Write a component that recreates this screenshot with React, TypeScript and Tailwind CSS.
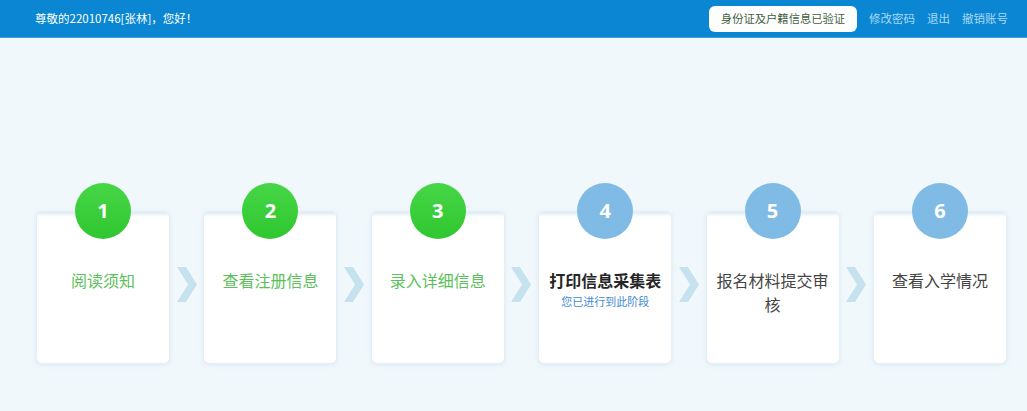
import React from 'react';

type StepState = 'done' | 'current' | 'todo';

interface Step {
  no: number;
  title: string;
  state: StepState;
  note?: string;
}

const steps: Step[] = [
  { no: 1, title: '阅读须知', state: 'done' },
  { no: 2, title: '查看注册信息', state: 'done' },
  { no: 3, title: '录入详细信息', state: 'done' },
  { no: 4, title: '打印信息采集表', state: 'current', note: '您已进行到此阶段' },
  { no: 5, title: '报名材料提交审核', state: 'todo' },
  { no: 6, title: '查看入学情况', state: 'todo' },
];

const font = { fontFamily: '"Noto Sans CJK SC", "Noto Sans", sans-serif' };

function Chevron() {
  return (
    <div className="flex w-[33.4px] shrink-0 justify-center pt-[56px]">
      <svg width="20" height="35" viewBox="0 0 20 35">
        <polygon points="0,0 9,0 20,17.5 9,35 0,35 11,17.5" fill="#c6e2ee" />
      </svg>
    </div>
  );
}

function StepCard({ step }: { step: Step }) {
  const circle =
    step.state === 'done'
      ? 'bg-gradient-to-b from-[#46d646] to-[#2fc72f]'
      : 'bg-[#7fbbe5]';

  const titleClass =
    step.state === 'done'
      ? 'text-[#5cbf5c]'
      : step.state === 'current'
        ? 'text-[#262626] font-bold'
        : 'text-[#444444]';

  return (
    <div className="relative h-[153px] w-[134px] shrink-0 rounded-[6px] border border-[#e3eef6] bg-white shadow-[0_1px_4px_rgba(150,190,220,0.25)]">
      <div className="h-[5px] rounded-t-[6px] bg-gradient-to-b from-[#dbeaf5] to-white" />
      <div
        className={`absolute left-1/2 top-[-29px] flex h-[56px] w-[56px] -translate-x-1/2 items-center justify-center rounded-full ${circle}`}
      >
        <span className="text-[20px] font-bold text-white" style={{ fontFamily: '"Open Sans", sans-serif' }}>
          {step.no}
        </span>
      </div>
      <div className="px-[9px] pt-[51px] text-center">
        <div className={`text-[16px] leading-[24px] ${titleClass}`}>{step.title}</div>
        {step.note && <div className="text-[11px] leading-[18px] text-[#3f8bd0]">{step.note}</div>}
      </div>
    </div>
  );
}

export default function App() {
  return (
    <div className="h-[411px] w-[1027px] overflow-hidden bg-[#f1f8fc]" style={font}>
      <header className="flex h-[38px] items-center border-b border-[#3aa0de] bg-[#0a86d2] pl-[35px] pr-[19px]">
        <span className="text-[11.5px] text-white">尊敬的22010746[张林]，您好！</span>
        <div className="ml-auto flex items-center">
          <span className="flex h-[26px] w-[148px] items-center justify-center rounded-[6px] bg-white text-[11.3px] text-[#3f5f3f]">
            身份证及户籍信息已验证
          </span>
          <nav className="ml-[12px] flex gap-[12px] text-[11.5px] text-[#a9d9f7]">
            <span>修改密码</span>
            <span>退出</span>
            <span>撤销账号</span>
          </nav>
        </div>
      </header>

      <div className="flex pl-[36px] pt-[173px]">
        {steps.map((step, i) => (
          <React.Fragment key={step.no}>
            {i > 0 && <Chevron />}
            <StepCard step={step} />
          </React.Fragment>
        ))}
      </div>
    </div>
  );
}
